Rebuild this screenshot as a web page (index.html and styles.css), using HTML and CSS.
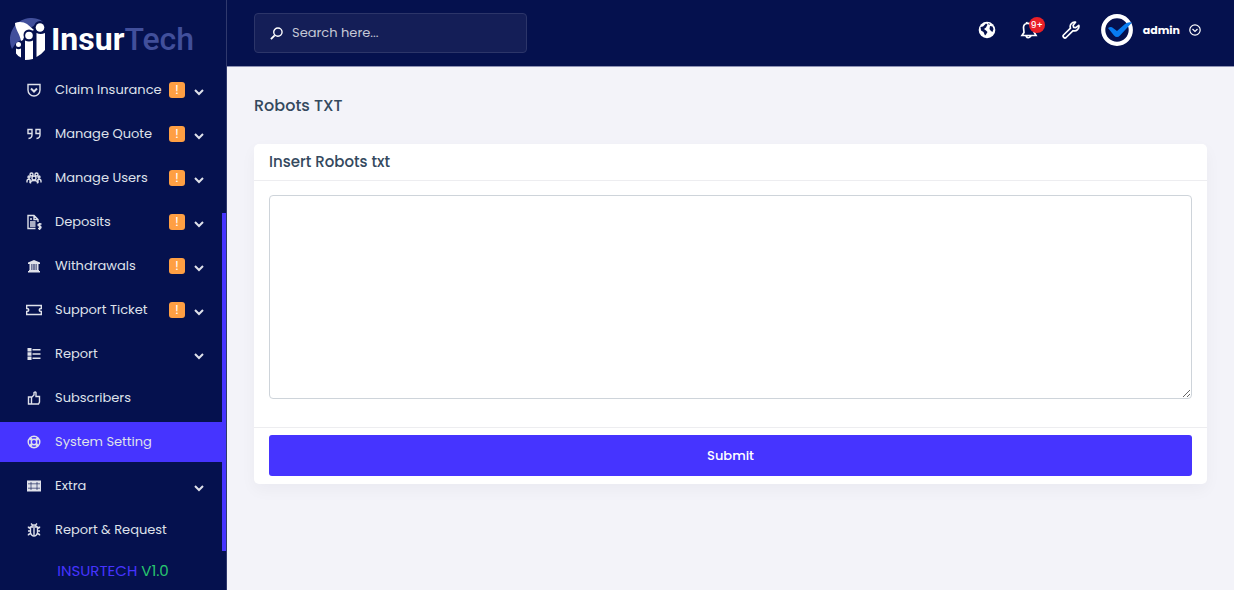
FILE: index.html
```
<!DOCTYPE html>
<html lang="en">
<head>
<meta charset="utf-8">
<meta name="viewport" content="width=device-width, initial-scale=1">
<title>InsurTech - Robots TXT</title>
<link rel="stylesheet" href="styles.css">
</head>
<body>
<svg class="defs" aria-hidden="true">
  <symbol id="chevron" viewBox="0 0 12 12"><path d="M2 4l4 4 4-4" fill="none" stroke="currentColor" stroke-width="2"/></symbol>
</svg>
<div class="app">
  <aside class="sidebar">
    <a class="logo" href="#">
      <svg class="logo-mark" viewBox="0 0 38 44" aria-hidden="true">
        <path d="M3 32C-3 19 5 2 21 1c6 0 10 1 13 4l-8 3-6 4-8 11-5 3z" fill="#414f9b"/>
        <path d="M6 6c4-2 9-1 12 1l7 6-9 4-2 6-2 1C11 17 6 12 6 6z" fill="#fff"/>
        <circle cx="31" cy="10" r="6" fill="#05114e"/><circle cx="20" cy="18" r="5.500" fill="#05114e"/>
        <g fill="#fff">
          <circle cx="31" cy="10.500" r="4.300"/><circle cx="20" cy="18.500" r="3.800"/><circle cx="9.500" cy="27.500" r="2.500"/>
          <path d="M27.500 16q4 2 8.500 0v17q-3 4-8.500 7zM16 23.500q4 2 8 0V42q-4 1-8 1zM7 31.500q2.500 1.500 5 0v9q-3-1-5-4z"/>
        </g>
      </svg>
      <span class="logo-text"><b>Insur</b><span class="logo-tech">Tech</span></span>
    </a>
    <nav class="menu">
      <a class="item" href="#"><svg class="icon" viewBox="0 0 16 16"><path d="M2 2.500h12V8a6 6 0 0 1-12 0z"/><path d="M5 6.500l3 3 3-3" stroke-width="2"/></svg><span class="label">Claim Insurance</span><span class="alert">!</span><svg class="chev"><use href="#chevron"/></svg></a>
      <a class="item" href="#"><svg class="icon" viewBox="0 0 16 16"><path d="M6 7.500H2v-4h4V9q0 3-3.500 3.500M14 7.500h-4v-4h4V9q0 3-3.500 3.500"/></svg><span class="label">Manage Quote</span><span class="alert">!</span><svg class="chev"><use href="#chevron"/></svg></a>
      <a class="item" href="#"><svg class="icon" viewBox="0 0 16 16"><circle cx="8" cy="8" r="2"/><circle cx="5.500" cy="4.500" r="1.500"/><circle cx="10.500" cy="4.500" r="1.500"/><circle cx="3" cy="7" r="1"/><circle cx="13" cy="7" r="1"/><path d="M4.500 13.500v-1q0-2 3.500-2t3.500 2v1M1 12.500V11q0-2 3-2M15 12.500V11q0-2-3-2M4 13V9M12 13V9"/></svg><span class="label">Manage Users</span><span class="alert">!</span><svg class="chev"><use href="#chevron"/></svg></a>
      <a class="item" href="#"><svg class="icon" viewBox="0 0 16 16"><path d="M9.500 14.500H2v-13h6l4 4V8M8 1.500v4h4M4 8h5.500M4 10h5.500M4 12h5.500M4 5h2"/><path d="M15.500 10h-2q-1.500 0-1.500 1t1.500 1 1.500 1.300-1.500 1.200H12M13.700 9v7"/></svg><span class="label">Deposits</span><span class="alert">!</span><svg class="chev"><use href="#chevron"/></svg></a>
      <a class="item" href="#"><svg class="icon" viewBox="0 0 16 16"><path d="M8 2L2 4.500v1.500h12V4.500zM3 12h10v1h1v1.500H2V13h1zM3.500 6h2v6h-2zM6.300 6h1.200v6H6.300zM8.500 6h1.200v6H8.500zM10.500 6h2v6h-2z" fill="currentColor" stroke="none"/></svg><span class="label">Withdrawals</span><span class="alert">!</span><svg class="chev"><use href="#chevron"/></svg></a>
      <a class="item" href="#"><svg class="icon" viewBox="0 0 16 16"><path d="M.7 3.500h14.600v3q-2 0-2 1.500t2 1.500v3H.7v-3q2 0 2-1.500t-2-1.500z"/></svg><span class="label">Support Ticket</span><span class="alert">!</span><svg class="chev"><use href="#chevron"/></svg></a>
      <a class="item" href="#"><svg class="icon" viewBox="0 0 16 16"><path d="M1.500 2h4v3.500h-4zM1.500 6.300h4v3.500h-4zM1.500 10.500h4V14h-4z" fill="currentColor" stroke="none"/><path d="M6.500 3.700h8M6.500 8h8M6.500 12.300h8"/></svg><span class="label">Report</span><svg class="chev"><use href="#chevron"/></svg></a>
      <a class="item" href="#"><svg class="icon" viewBox="0 0 16 16"><path d="M2.500 7h3v7h-3zM5.500 7.500L8 5V2.500q1.500-1 2 0V6.500h3.500V12l-1 2h-7"/></svg><span class="label">Subscribers</span></a>
      <a class="item active" href="#" aria-current="page"><svg class="icon" viewBox="0 0 16 16"><circle cx="8" cy="8" r="5.800"/><circle cx="8" cy="8" r="2.700"/><path d="M3.800 3.800l2 2M12.200 3.800l-2 2M3.800 12.200l2-2M12.200 12.200l-2-2" stroke-width="2.500"/></svg><span class="label">System Setting</span></a>
      <a class="item" href="#"><svg class="icon" viewBox="0 0 16 16"><path d="M1 2.500h14v11H1z" fill="currentColor" stroke="none"/><path d="M2 5.800h12M2 10.200h12M5 4v8M11 4v8" stroke="#05114e" stroke-width=".6"/></svg><span class="label">Extra</span><svg class="chev"><use href="#chevron"/></svg></a>
      <a class="item" href="#"><svg class="icon" viewBox="0 0 16 16"><path d="M4.500 5h7v6q-1 3-3.500 3T4.500 11zM5.500 5q0-2 2.500-2t2.500 2M5 1.500l1.500 1.500M11 1.500L9.500 3M8 6v7M2 9h2.500M11.500 9H14M2.500 4.500v1l2 1M13.500 4.500v1l-2 1M2.500 13.500v-1l2-1M13.500 13.500v-1l-2-1"/></svg><span class="label">Report &amp; Request</span></a>
    </nav>
    <div class="version">INSURTECH <span class="version-no">V1.0</span></div>
    <div class="scroll-thumb"></div>
  </aside>
  <div class="page">
    <header class="topbar">
      <label class="search">
        <svg class="search-icon" viewBox="0 0 14 14" aria-hidden="true"><circle cx="8.500" cy="5.500" r="4.500"/><path d="M5 9l-4 4" stroke-width="2"/></svg>
        <input class="search-input" type="search" placeholder="Search here..." aria-label="Search">
      </label>
      <div class="tools">
        <button class="tool" type="button" aria-label="Language"><svg viewBox="0 0 18 18"><circle cx="9" cy="9" r="8.300" fill="#fff"/><path d="M2.500 6l2.500-.5 3-3 1.500 1-1.500 3-2 1.500 2 1.500 1.500 1.500L8 13.500l-1 1L5.500 11 3 9.500zM12 5l2.500.5 1 2.500-1 3-1.500-1-1.500-2zM10 2l2 1-1 1z" fill="#05114e"/></svg></button>
        <button class="tool" type="button" aria-label="Notifications"><svg viewBox="0 0 18 18"><path d="M2 14.500l2-3-.5-5Q3.500 3 7 2.500q5-.5 6 4L14 11l2 3.500zM6 15q2 3.500 5 0M7 3L6.500 1" fill="none" stroke="#fff" stroke-width="1.700"/></svg><span class="count">9+</span></button>
        <button class="tool" type="button" aria-label="Tools"><svg viewBox="0 0 18 18"><path d="M13.500 1.200a4.500 4.500 0 0 0-5 6L1.500 14q-1 1 .2 2.300t2.400.2l7-6.800a4.500 4.500 0 0 0 5.700-5.400l-3 2.400-2.200-.4-.5-2z" fill="none" stroke="#fff" stroke-width="1.700" stroke-linejoin="round"/></svg></button>
        <button class="user" type="button">
          <svg class="avatar" viewBox="0 0 32 32" aria-hidden="true"><circle cx="16" cy="16" r="13.800" fill="none" stroke="#fff" stroke-width="4.200"/><path d="M7 14q3-2 5 0l4 3 8-7q3-2.500 7-1.500L19 21.500q-3 3-6 0z" fill="#087cf0"/></svg>
          <span class="user-name">admin</span>
          <svg class="user-chev" viewBox="0 0 12 12" aria-hidden="true"><circle cx="6" cy="6" r="5.200"/><path d="M3.500 5L6 7.500 8.500 5"/></svg>
        </button>
      </div>
    </header>
    <main class="content">
      <h1 class="title">Robots TXT</h1>
      <form class="card">
        <h2 class="card-head"><label for="robots">Insert Robots txt</label></h2>
        <div class="card-body"><textarea class="robots" id="robots"></textarea></div>
        <div class="card-foot"><button class="submit" type="button">Submit</button></div>
      </form>
    </main>
  </div>
</div>
</body>
</html>
```
FILE: styles.css
```
* { box-sizing: border-box; }
body {
  margin: 0;
  background: #f3f3f9;
  color: #34495e;
  font: 13px/20px Poppins, Inter, sans-serif;
}
button, input, textarea { font: inherit; }
a { color: inherit; text-decoration: none; }
.defs { position: absolute; width: 0; height: 0; }
.app { display: flex; min-height: 100vh; }

.sidebar {
  position: relative;
  flex: 0 0 227px;
  background: #05114e;
  border-right: 1px solid #30396d;
  color: #dfe1ea;
}
.logo { display: flex; align-items: center; gap: 4px; height: 70px; padding: 7px 0 0 9px; }
.logo-mark { width: 38px; height: 44px; }
.logo-text { color: #fff; font: 32px/44px Roboto, sans-serif; }
.logo-tech { color: #414f9b; font-weight: 500; }
.menu { display: flex; flex-direction: column; gap: 4px; }
.item {
  display: flex;
  align-items: center;
  height: 40px;
  margin-right: 4px;
  padding: 0 17px 0 26px;
}
.active { background: #4634ff; }
.icon { width: 16px; height: 16px; margin-right: 13px; fill: none; stroke: currentColor; stroke-width: 1.4; }
.label { flex: 1; white-space: nowrap; }
.alert {
  width: 16px;
  margin-right: 8px;
  border-radius: 3px;
  background: #ff9f43;
  color: #fff;
  line-height: 16px;
  text-align: center;
}
.chev { width: 12px; height: 12px; margin-top: 3px; }
.version { padding-top: 7px; color: #4634ff; font-size: 15px; line-height: 28px; text-align: center; }
.version-no { color: #28c76f; }
.scroll-thumb {
  position: absolute;
  top: 213px;
  right: 0;
  bottom: 39px;
  width: 4px;
  background: #4634ff;
}

.page { flex: 1; min-width: 0; }
.topbar {
  display: flex;
  align-items: center;
  justify-content: space-between;
  height: 67px;
  padding: 0 33px 0 27px;
  border-bottom: 1px solid #8e92b4;
  background: #05114e;
}
.search {
  display: flex;
  align-items: center;
  gap: 9px;
  width: 273px;
  height: 40px;
  padding: 0 15px;
  border: 1px solid #2c3569;
  border-radius: 4px;
  background: #141e57;
}
.search-icon { width: 13px; height: 13px; fill: none; stroke: #fff; stroke-width: 1.5; }
.search-input {
  flex: 1;
  min-width: 0;
  padding: 0;
  border: 0;
  outline: 0;
  background: transparent;
  color: #fff;
}
.search-input::placeholder { color: #c4c7d5; opacity: 1; }
.tools { display: flex; align-items: center; gap: 24px; padding-bottom: 6px; }
.tool { position: relative; width: 18px; height: 18px; padding: 0; border: 0; background: none; }
.tool svg { display: block; width: 18px; height: 18px; }
.count {
  position: absolute;
  top: -4px;
  right: -7px;
  width: 16px;
  border-radius: 8px;
  background: #ea2027;
  color: #fff;
  font-size: 9px;
  font-weight: 500;
  line-height: 16px;
  text-align: center;
}
.user { display: flex; align-items: center; padding: 0; margin-left: -3px; border: 0; background: none; color: #fff; }
.avatar { width: 32px; height: 32px; }
.user-name { margin: 0 9px 0 10px; font-size: 11px; font-weight: 700; }
.user-chev { width: 12px; height: 12px; fill: none; stroke: #fff; stroke-width: 1.2; }

.content { padding: 27px; }
.title { margin: 0 0 26px; font-size: 16px; font-weight: 500; line-height: 24px; }
.card { border-radius: 5px; background: #fff; box-shadow: 0 6px 16px #12263f0a; }
.card-head { margin: 0; padding: 6px 15px; border-bottom: 1px solid #ededf0; font-size: 15px; font-weight: 500; line-height: 24px; }
.card-body { padding: 14px 15px 28px; }
.robots { display: block; width: 100%; height: 204px; padding: 12px; border: 1px solid #ced4da; border-radius: 4px; resize: vertical; outline: 0; }
.card-foot { padding: 7px 15px 8px; border-top: 1px solid #ededf0; }
.submit { display: block; width: 100%; height: 41px; border: 0; border-radius: 3px; background: #4634ff; color: #fff; font-weight: 500; }
```
